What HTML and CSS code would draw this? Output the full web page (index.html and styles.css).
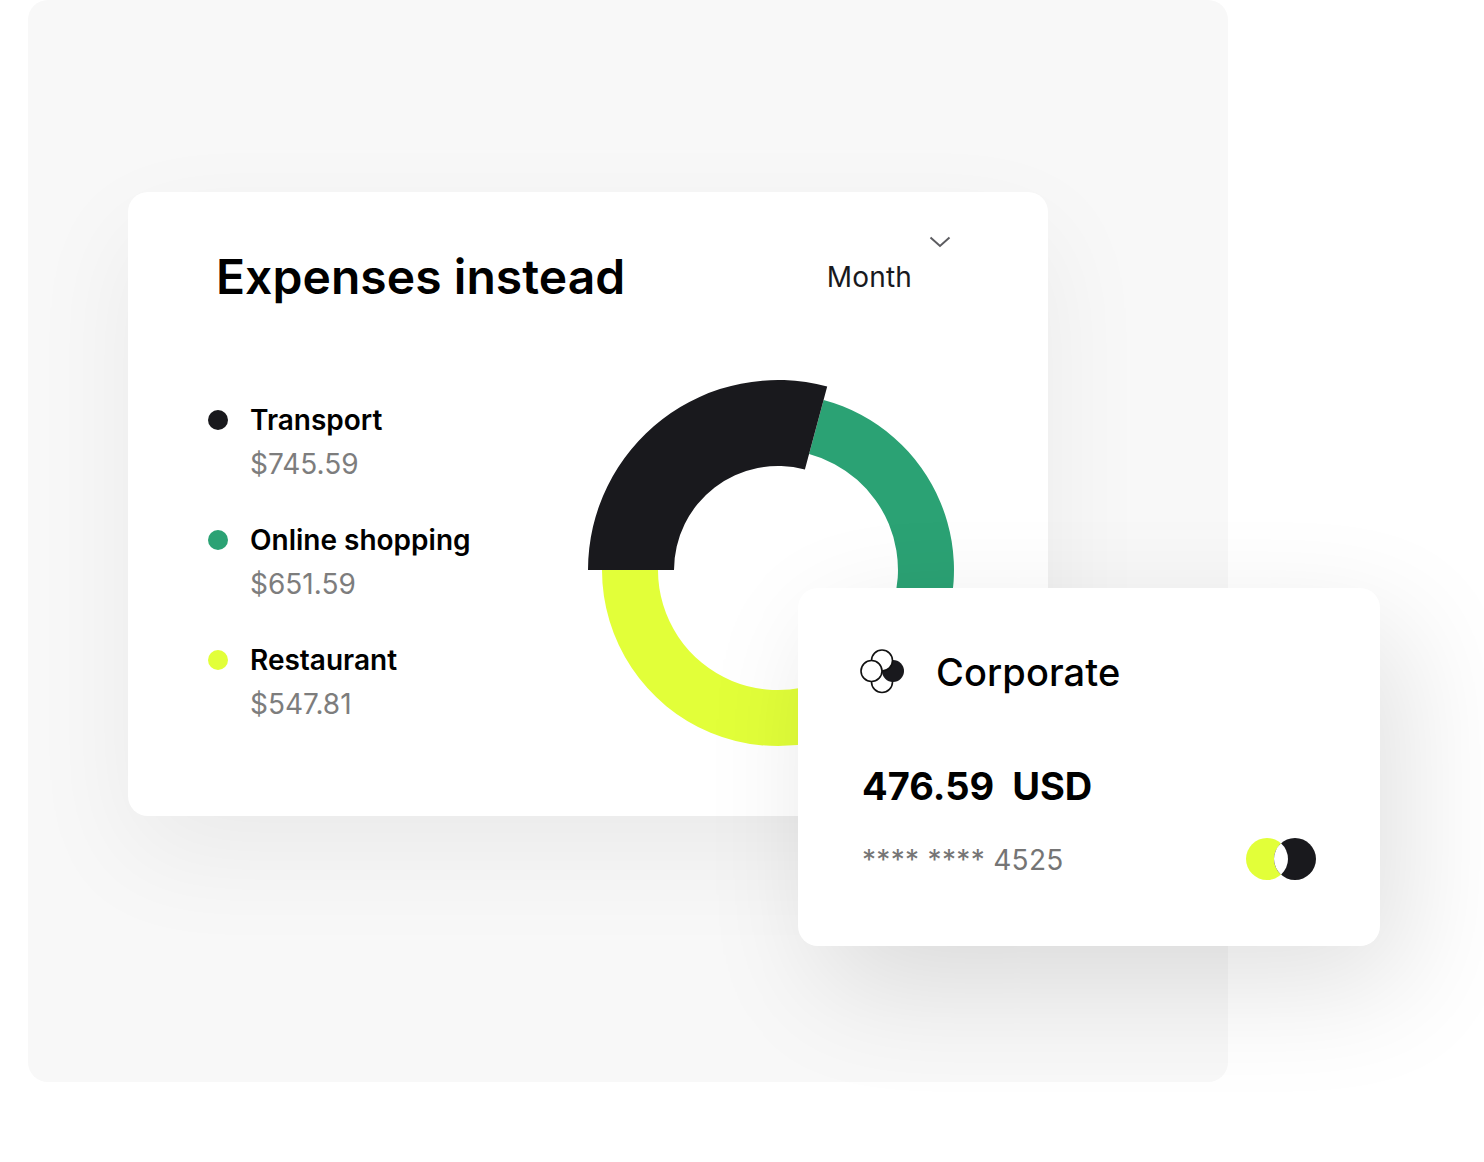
FILE: index.html
```html
<!DOCTYPE html>
<html>
<head>
	<meta charset="utf-8">
	<title>Expenses instead</title>
	<link rel="stylesheet" href="styles.css">
</head>
<body>
<div class="panel">
	<div class="card">
		<div class="head">
			<h1 class="title">Expenses instead</h1>
			<div class="period">
				<span class="period-label">Month</span>
				<svg class="chevron" width="22" height="12" viewBox="0 0 22 12"><path d="M1.5 1.5 L11 10 L20.5 1.5" fill="none" stroke="#5c5c60" stroke-width="2"/></svg>
			</div>
		</div>
		<div class="body">
			<ul class="legend">
				<li class="item">
					<span class="dot dot-black"></span>
					<div>
						<div class="name">Transport</div>
						<div class="amount">$745.59</div>
					</div>
				</li>
				<li class="item">
					<span class="dot dot-green"></span>
					<div>
						<div class="name">Online shopping</div>
						<div class="amount">$651.59</div>
					</div>
				</li>
				<li class="item">
					<span class="dot dot-yellow"></span>
					<div>
						<div class="name">Restaurant</div>
						<div class="amount">$547.81</div>
					</div>
				</li>
			</ul>
			<svg class="donut" width="380" height="380" viewBox="0 0 380 380">
				<path fill="#2ba274" d="M235.6 20 A176 176 0 0 1 342.4 278 L293.9 250 A120 120 0 0 0 221.1 74.1 Z"/>
				<path fill="#e2ff39" d="M14 190 A176 176 0 0 0 314.5 314.5 L274.9 274.9 A120 120 0 0 1 70 190 Z"/>
				<path fill="#19191d" d="M0 190 A190 190 0 0 1 239.2 6.5 L216.9 89.5 A104 104 0 0 0 86 190 Z"/>
			</svg>
		</div>
	</div>
</div>
<div class="account">
	<div class="account-head">
		<svg class="logo" width="46" height="46" viewBox="0 0 46 46">
			<circle cx="23" cy="33" r="10.5" fill="#fff" stroke="#111" stroke-width="1.6"/>
			<circle cx="34" cy="22" r="11" fill="#19191d"/>
			<circle cx="23" cy="11.5" r="10.5" fill="#fff" stroke="#111" stroke-width="1.6"/>
			<circle cx="12.5" cy="22" r="10.5" fill="#fff" stroke="#111" stroke-width="1.6"/>
		</svg>
		<span class="account-name">Corporate</span>
	</div>
	<div class="balance"><span>476.59</span><span>USD</span></div>
	<div class="account-foot">
		<span class="number">**** **** 4525</span>
		<svg class="brand" width="70" height="42" viewBox="0 0 70 42">
			<circle cx="21" cy="21" r="21" fill="#e2ff39"/>
			<circle cx="49" cy="21" r="21" fill="#19191d"/>
			<path fill="#fff" d="M35 5.35 A21 21 0 0 1 35 36.65 A21 21 0 0 1 35 5.35 Z"/>
		</svg>
	</div>
</div>
</body>
</html>
```
FILE: styles.css
```css
html, body {
	margin: 0;
	height: 1162px;
	overflow: hidden;
	background: #fff;
}

body {
	position: relative;
	font-family: Inter, "Liberation Sans", sans-serif;
	color: #000;
}

.panel {
	margin-left: 28px;
	width: 1200px;
	height: 1082px;
	padding: 192px 0 0 100px;
	box-sizing: border-box;
	background: #f8f8f8;
	border-radius: 20px;
}

.card {
	width: 920px;
	height: 624px;
	background: #fff;
	border-radius: 20px;
	box-shadow: 0 40px 110px rgba(0, 0, 0, 0.06);
}

.head {
	display: flex;
	justify-content: space-between;
	padding: 43px 97px 0 88px;
}

.title {
	margin: 0;
	font-size: 48px;
	line-height: 84px;
	font-weight: 600;
	letter-spacing: 0.06px;
}

.period {
	display: flex;
	align-items: flex-start;
	gap: 17px;
}

.period-label {
	font-size: 28px;
	line-height: 40px;
	margin-top: 22px;
	letter-spacing: 0.2px;
	color: #19191d;
}

.chevron {
	margin-top: 1px;
}

.body {
	display: flex;
	justify-content: space-between;
	padding: 61px 80px 0 80px;
}

.legend {
	list-style: none;
	margin: 0;
	padding: 20px 0 0;
}

.item {
	display: flex;
	gap: 22px;
	height: 120px;
}

.dot {
	width: 20px;
	height: 20px;
	border-radius: 50%;
	margin-top: 10px;
}

.dot-black { background: #19191d; }
.dot-green { background: #2ba274; }
.dot-yellow { background: #e2ff39; }

.name {
	font-size: 28px;
	line-height: 40px;
	font-weight: 600;
}

.amount {
	font-size: 28px;
	line-height: 40px;
	margin-top: 4px;
	color: #7d7d7d;
}

.account {
	position: absolute;
	left: 798px;
	top: 588px;
	width: 582px;
	height: 358px;
	box-sizing: border-box;
	padding: 61px 64px 0 61px;
	background: #fff;
	border-radius: 20px;
	box-shadow: 24px 40px 120px rgba(0, 0, 0, 0.12);
}

.account-head {
	display: flex;
	align-items: center;
	gap: 31px;
}

.logo {
	flex: none;
}

.account-name {
	font-size: 38px;
	line-height: 46px;
	font-weight: 500;
	letter-spacing: 0.1px;
}

.balance {
	display: flex;
	gap: 18px;
	margin: 66px 0 0 3px;
	font-size: 38px;
	line-height: 50px;
	font-weight: 700;
}

.account-foot {
	display: flex;
	justify-content: space-between;
	align-items: center;
	margin: 27px 0 0 3px;
}

.number {
	font-size: 28px;
	letter-spacing: 0.32px;
	color: #757575;
}

.brand {
	margin-bottom: 2px;
}
```
